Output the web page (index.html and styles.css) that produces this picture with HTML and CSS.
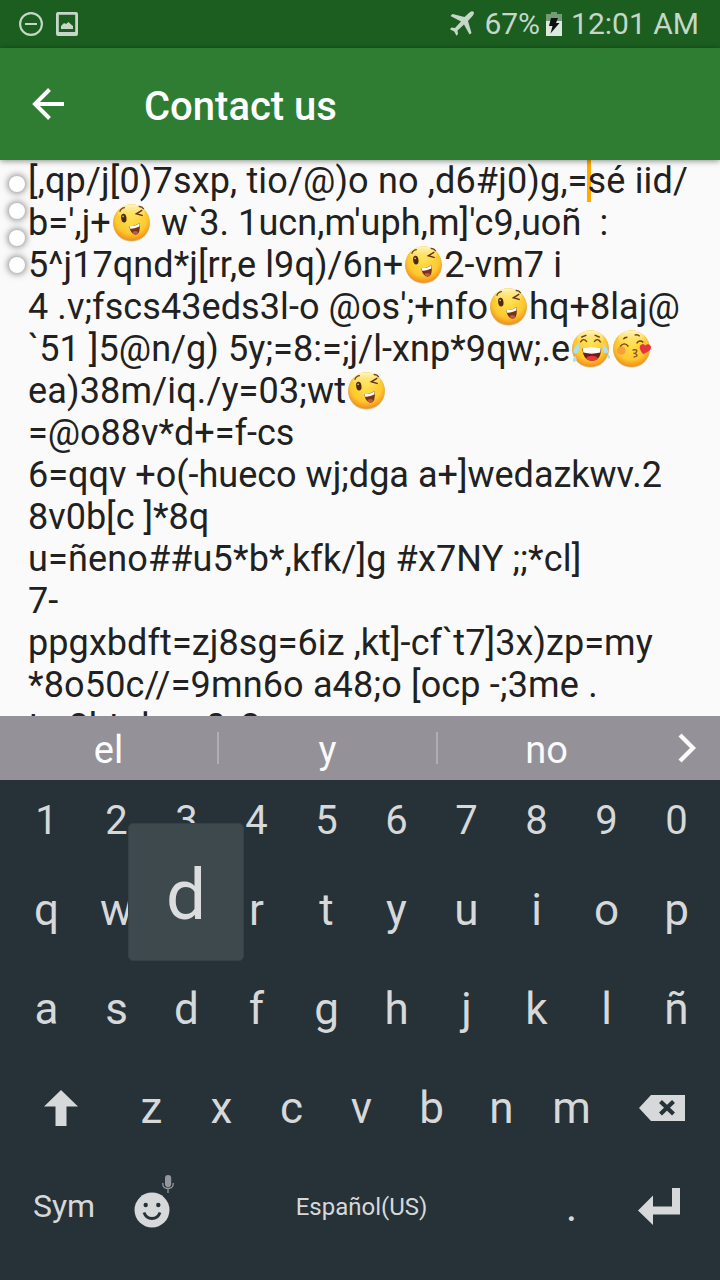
FILE: index.html
```html
<!DOCTYPE html>
<html lang="en">
<head>
<meta charset="utf-8">
<title>Contact us</title>
<link rel="stylesheet" href="styles.css">
</head>
<body>
<svg class="defs" aria-hidden="true">
  <defs>
    <radialGradient id="face" cx=".5" cy=".38" r=".65">
      <stop offset="0" stop-color="#ffe04d"/><stop offset=".65" stop-color="#fdc92f"/><stop offset="1" stop-color="#ef8414"/>
    </radialGradient>
    <linearGradient id="shine" x1="0" y1="0" x2="0" y2="1">
      <stop offset="0" stop-color="#fffbd8" stop-opacity=".9"/><stop offset="1" stop-color="#ffe666" stop-opacity="0"/>
    </linearGradient>
  </defs>
  <symbol id="base" viewBox="0 0 40 40">
    <circle cx="20" cy="20.6" r="18" fill="#b98a3c" opacity=".55"/>
    <circle cx="20" cy="20" r="17.8" fill="url(#face)"/>
    <ellipse cx="20" cy="10.5" rx="13" ry="8" fill="url(#shine)"/>
  </symbol>
  <symbol id="wink" viewBox="0 0 40 40">
    <use href="#base"/>
    <path d="M8.500 9.500q1.500-4 5-4M27 4.500q3-.5 5 2.500" fill="none" stroke="#704312" stroke-width="1.300"/>
    <ellipse cx="12.500" cy="15.700" rx="2.600" ry="4.300" fill="#4a2a12" transform="rotate(-8 12.500 15.700)"/>
    <circle cx="11.800" cy="14" r=".9" fill="#d8b27d"/>
    <path d="M30.500 8l-5.800 3.500 6.300 1.800" fill="none" stroke="#5f3512" stroke-width="1.400"/>
    <path d="M17.800 23.500Q24 23.500 28 20.500Q29 32 24 32Q19 31.500 17.800 23.500z" fill="#7a3215"/>
    <path d="M18 23.500Q24 23.500 27.900 20.700L27.600 24Q23 26.500 18.700 26z" fill="#fff"/>
    <ellipse cx="23.800" cy="30" rx="2.700" ry="1.700" fill="#bd5a42"/>
  </symbol>
  <symbol id="joy" viewBox="0 0 40 40">
    <use href="#base"/>
    <path d="M11 9l5-2M24 7l5 2M10 14q3-5 6.500-.5M23.500 13.500q3.500-4.500 6.500.5" fill="none" stroke="#704312" stroke-width="1.400"/>
    <path d="M12 20Q21 17.500 30.500 20Q30 32 21.500 32Q13 32 12 20z" fill="#6e1d12"/>
    <path d="M12.500 19.800Q21 17.500 30 19.800L29.500 24Q21 26 13 24z" fill="#fff"/>
    <ellipse cx="21.500" cy="29.500" rx="5.500" ry="2.400" fill="#ed333d"/>
    <path d="M9 15Q9 24 6 25Q2 25 4 20Q6 17 9 15zM32 15Q38 20 37 24Q34 26 32 22zM5 27Q8 31 5 33Q2 34 3 30zM37 25Q40 28 38.500 30Q36 30 37 25z" fill="#a9e0f2"/>
  </symbol>
  <symbol id="kiss" viewBox="0 0 40 40">
    <use href="#base"/>
    <circle cx="10" cy="22" r="4" fill="#f8893e" opacity=".7"/>
    <path d="M9 18q4-5 8 0M25 15q3-4 6.500-1M12 11q1-2 4-2M23 7q3-1 5 1" fill="none" stroke="#704312" stroke-width="1.400"/>
    <path d="M21 21.500q5-1 4 1.500t-3 1.500q5 1 2.500 3.500M22 28q1 .7 2-.5" fill="none" stroke="#8d5018" stroke-width="1.300"/>
    <path d="M31.500 25.500Q26.500 20 28.500 17Q31 14 33.500 17Q37 14.500 39 18Q40 22 31.500 25.500z" fill="#e73540"/>
  </symbol>
</svg>

<main class="screen">
  <header class="status">
    <svg class="status-dnd" width="24" height="24" viewBox="0 0 24 24"><circle cx="12" cy="12" r="10.900" fill="none" stroke="currentColor" stroke-width="2.100"/><path d="M6 12h12" stroke="currentColor" stroke-width="2"/></svg>
    <svg class="status-image" width="22" height="24" viewBox="0 0 22 24"><path fill="currentColor" fill-rule="evenodd" d="M2 0h18q2 0 2 2v20q0 2-2 2H2q-2 0-2-2V2Q0 0 2 0zM2.800 2.800V20H19.200V2.800z"/><path fill="currentColor" d="M5 17v-3l3-3 2 1 2.500-2 2 2 2.500 2v3z"/></svg>
    <svg class="status-plane" width="26" height="26" viewBox="0 0 26 26"><path fill="currentColor" d="M24.500.8q1.200 1.500-.8 4L19 10l3.500 12-2 1.500L15 13.500 8.500 19.500 9 23l-1.500 1.800-2.300-4.300-4.300-2.300L2.500 16.500 6 17l6-6.500L1.500 5 3.500 3l12 3L20.500 1.500q2.500-2 4-.7z"/></svg>
    <span class="status-percent">67%</span>
    <svg class="status-battery" width="16" height="24" viewBox="0 0 16 24"><path fill="#739b76" d="M5 0h6v2h5v7H0V2h5z"/><path fill="#dde8de" d="M0 9h16v15H0z"/><path fill="#111" d="M5 6h7l-2 5h3.500L4.500 21.500 6.500 14H3z"/></svg>
    <span class="status-time">12:01 AM</span>
  </header>

  <nav class="appbar">
    <svg width="32" height="32" viewBox="0 0 32 32"><path d="M32 16H4M17.500 1.500L3 16l14.500 14.500" fill="none" stroke="#fff" stroke-width="4"/></svg>
    <h1 class="title">Contact us</h1>
  </nav>

  <section class="message">
    <div class="handles"><i class="dot"></i><i class="dot"></i><i class="dot"></i><i class="dot"></i></div>
    <p class="line loose">[,qp/j[0)7sxp, tio/@)o no ,d6#j0)g,=<span class="caret"></span>sé iid/</p>
    <p class="line airy">b=',j+<svg class="emoji"><use href="#wink"/></svg> w`3. 1ucn,m'uph,m]'c9,uoñ&nbsp; :</p>
    <p class="line airy">5^j17qnd*j[rr,e l9q)/6n+<svg class="emoji"><use href="#wink"/></svg>2-vm7 i</p>
    <p class="line airy">4 .v;fscs43eds3l-o @os';+nfo<svg class="emoji"><use href="#wink"/></svg>hq+8laj@</p>
    <p class="line airy">`51 ]5@n/g) 5y;=8:=;j/l-xnp*9qw;.e<svg class="emoji"><use href="#joy"/></svg><svg class="emoji"><use href="#kiss"/></svg></p>
    <p class="line loose">ea)38m/iq./y=03;wt<svg class="emoji"><use href="#wink"/></svg></p>
    <p class="line">=@o88v*d+=f-cs</p>
    <p class="line">6=qqv +o(-hueco wj;dga a+]wedazkwv.2</p>
    <p class="line">8v0b[c ]*8q</p>
    <p class="line loose">u=ñeno##u5*b*,kfk/]g #x7NY ;;*cl]</p>
    <p class="line">7-</p>
    <p class="line airy">ppgxbdft=zj8sg=6iz ,kt]-cf`t7]3x)zp=my</p>
    <p class="line loose">*8o50c//=9mn6o a48;o [ocp -;3me .</p>
    <p class="line">tu 8ht dw p0,,8</p>
  </section>

  <section class="suggestions">
    <span class="word">el</span>
    <span class="word">y</span>
    <span class="word">no</span>
    <svg class="more" width="18" height="30" viewBox="0 0 18 30"><path d="M2 2l13 13L2 28" fill="none" stroke="#fafafa" stroke-width="4.300"/></svg>
  </section>

  <section class="keyboard">
    <div class="row digits"><span>1</span><span>2</span><span>3</span><span>4</span><span>5</span><span>6</span><span>7</span><span>8</span><span>9</span><span>0</span></div>
    <div class="row"><span>q</span><span>w</span><span>e</span><span>r</span><span>t</span><span>y</span><span>u</span><span>i</span><span>o</span><span>p</span></div>
    <div class="row"><span>a</span><span>s</span><span>d</span><span>f</span><span>g</span><span>h</span><span>j</span><span>k</span><span>l</span><span>ñ</span></div>
    <div class="row shifted">
      <span class="shift"><svg width="34" height="36" viewBox="0 0 34 36"><path fill="currentColor" d="M17 0l17 16.500H22.500V36h-11V16.500H0z"/></svg></span>
      <span>z</span><span>x</span><span>c</span><span>v</span><span>b</span><span>n</span><span>m</span>
      <span class="erase"><svg width="46" height="26" viewBox="0 0 46 26"><path fill="currentColor" d="M12 0h34v26H12L0 13z"/><path d="M21.500 6.500l13 12.500M34.500 6.500L21.500 19" stroke="#263238" stroke-width="4.200"/></svg></span>
    </div>
    <div class="row bottom">
      <span class="sym">Sym</span>
      <span class="smile">
        <svg width="36" height="36" viewBox="0 0 36 36"><circle cx="18" cy="18" r="17.500" fill="currentColor"/><circle cx="11.700" cy="13" r="2.200" fill="#263238"/><circle cx="24.300" cy="13" r="2.200" fill="#263238"/><path d="M10 20.500q2 6 8 6t8-6" fill="none" stroke="#263238" stroke-width="2.800"/></svg>
        <svg class="mic" width="12" height="18" viewBox="0 0 12 18"><rect x="3" y="0" width="6.200" height="12" rx="3.100" fill="#92989c"/><path d="M.8 8v1q0 4.500 5.200 4.500T11.200 9V8M6 13.500V18" fill="none" stroke="#92989c" stroke-width="1.300"/></svg>
      </span>
      <span class="space">Español(US)</span>
      <span class="period">.</span>
      <span class="enter"><svg width="42" height="37" viewBox="0 0 42 37"><path fill="currentColor" d="M34 0h8v26.500H15V37L0 22.500 15 7.500v11h19z"/></svg></span>
    </div>
    <div class="popup">d</div>
  </section>
</main>
</body>
</html>
```

FILE: styles.css
```css
* { box-sizing: border-box; }
body { margin: 0; font-family: Roboto, "Noto Sans", sans-serif; }
svg { display: block; flex: none; }
.defs { position: absolute; width: 0; height: 0; }

.screen {
  width: 720px;
  height: 1280px;
  display: grid;
  grid-template-rows: 48px 112px 556px 64px 500px;
  overflow: hidden;
}

.status {
  display: flex;
  align-items: center;
  padding: 0 21px 0 19px;
  background: #1b5e20;
  color: #c6d7c7;
  font-size: 30px;
  line-height: 50px;
  white-space: nowrap;
}
.status-image { margin-left: 13px; }
.status-plane { margin-left: auto; }
.status-percent { margin-left: 9px; }
.status-battery { margin: 0 9px 0 6px; }

.appbar {
  display: flex;
  align-items: center;
  gap: 80px;
  padding-left: 32px;
  background: #2e7d32;
  box-shadow: 0 1px 6px rgba(0, 0, 0, .45);
  z-index: 1;
}
.title {
  margin: 5px 0 0;
  font-size: 40px;
  font-weight: 500;
  color: #fff;
}

.message {
  position: relative;
  overflow: hidden;
  padding-left: 28px;
  background: #fafafa;
  color: #212121;
  font-size: 36px;
}
.line {
  display: flex;
  height: 42px;
  margin: 0;
  line-height: 42px;
  white-space: pre;
}
.airy { letter-spacing: .08px; }
.loose { letter-spacing: .16px; }
.caret { width: 4px; height: 42px; margin: 0 -3px 0 -1px; background: #ffab00; }
.emoji { width: 41px; height: 41px; }
.handles {
  position: absolute;
  left: 9px;
  top: 16px;
  display: grid;
  gap: 11px;
}
.dot {
  width: 16px;
  height: 16px;
  border-radius: 50%;
  background: #fff;
  box-shadow: 0 0 7px 1px rgba(0, 0, 0, .5);
}

.suggestions {
  display: grid;
  grid-template-columns: 217px 219px 219px 65px;
  align-items: center;
  background: #949298;
  color: #fafafa;
  font-size: 38px;
}
.word {
  height: 32px;
  line-height: 36px;
  text-align: center;
}
.word + .word { border-left: 2px solid #b0aeb0; }
.word:nth-child(1) { color: #fff; }
.more { margin-left: 23px; }

.keyboard {
  position: relative;
  display: grid;
  grid-template-rows: 80px 100px 98px 100px 96px;
  padding: 0 8px 0 11px;
  background: #263238;
  color: #d6d8da;
  font-size: 44px;
}
.row {
  display: grid;
  grid-template-columns: repeat(10, 70px);
  place-items: center;
  padding-left: .5px;
}
.digits { font-size: 40px; }
.shifted { grid-template-columns: 105px repeat(7, 70px) 105px; }
.shift { margin-right: 7px; }
.erase { margin-left: 5px; }
.bottom { grid-template-columns: 105px 70px 350px 70px 105px; }
.sym { font-size: 32px; }
.smile { position: relative; padding-top: 8px; }
.mic { position: absolute; left: 28px; top: -9px; }
.space { padding-top: 2px; font-size: 24px; }
.enter { padding-right: 1px; }
.popup {
  position: absolute;
  left: 128px;
  top: 43px;
  width: 116px;
  height: 138px;
  border: 1px solid #354147;
  border-radius: 5px;
  background: #3e494e;
  color: #dcdddf;
  font-size: 71px;
  line-height: 142px;
  text-align: center;
}
```
